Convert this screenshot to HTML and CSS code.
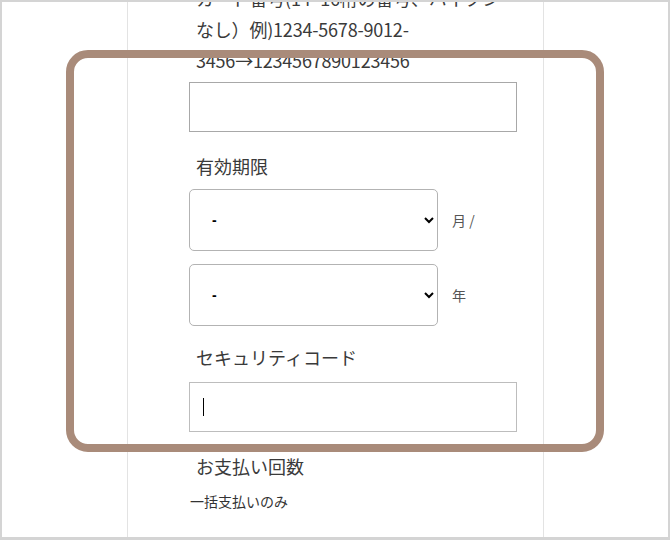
FILE: index.html
```html
<!DOCTYPE html>
<html lang="ja">
<head>
    <meta charset="UTF-8">
    <meta name="viewport" content="width=device-width, initial-scale=1.0">
    <title>お支払い情報</title>
    <link rel="stylesheet" href="styles.css">
</head>
<body>
    <div class="screen">
        <div class="page">
            <form class="card-form">
                <!-- Card number -->
                <p class="note">カード番号(14~16桁の番号、ハイフンなし）例)1234-5678-9012-3456→1234567890123456</p>
                <input type="text" class="field">

                <!-- Expiry -->
                <label class="label">有効期限</label>
                <div class="expiry-row">
                    <select class="pick"><option>-</option></select>
                    <span class="unit">月 /</span>
                </div>
                <div class="expiry-row">
                    <select class="pick"><option>-</option></select>
                    <span class="unit">年</span>
                </div>

                <!-- Security code -->
                <label class="label code-label">セキュリティコード</label>
                <div class="field-wrap">
                    <input type="text" class="field">
                    <span class="caret"></span>
                </div>

                <!-- Payments -->
                <label class="label">お支払い回数</label>
                <p class="plain">一括支払いのみ</p>
            </form>
        </div>

        <!-- highlight frame -->
        <div class="highlight"></div>
    </div>
</body>
</html>
```

FILE: styles.css
```css
body {
    margin: 0;
    font-family: "Noto Sans CJK JP", "Noto Sans", sans-serif;
    color: #3a3a3a;
    background: #fff;
}
.screen {
    position: relative;
    box-sizing: border-box;
    width: 670px;
    height: 540px;
    border: 2px solid #d4d4d4;
    border-bottom-width: 3px;
    overflow: hidden;
}
.page {
    display: flow-root;
    box-sizing: border-box;
    width: 417px;
    height: 100%;
    margin-left: 125px;
    border-left: 1px solid #e3e3e3;
    border-right: 1px solid #e3e3e3;
}
.card-form {
    display: flex;
    flex-direction: column;
    align-items: flex-start;
    padding-left: 61px;
    margin-top: -19px;
}
.note {
    margin: 0;
    width: 305px;
    padding-left: 7px;
    font-size: 18px;
    line-height: 31px;
    letter-spacing: -0.2px;
}
.field {
    box-sizing: border-box;
    width: 328px;
    height: 50px;
    margin: 6px 0 0;
    border: 1px solid #a8a8a8;
    border-radius: 0;
    background: #fff;
    outline: none;
}
.label {
    display: block;
    padding-left: 7px;
    margin-top: 19px;
    margin-bottom: 7px;
    font-size: 18px;
    line-height: 31px;
}
.expiry-row {
    display: flex;
    align-items: center;
    gap: 14px;
    margin-bottom: 13px;
}
.pick {
    box-sizing: border-box;
    width: 249px;
    height: 62px;
    padding-left: 18px;
    border: 1px solid #b3b3b3;
    border-radius: 5px;
    background: #fff;
    color: #000;
    font-size: 14px;
    font-weight: bold;
    font-family: "Liberation Sans", sans-serif;
}
.unit {
    font-size: 14px;
    color: #555;
}
.expiry-row + .label {
    margin-top: 3px;
}
.code-label {
    margin-bottom: 9px;
}
.field-wrap {
    position: relative;
}
.field-wrap .field {
    margin-top: 0;
    border-color: #bdbdbd;
}
.caret {
    position: absolute;
    left: 14px;
    top: 16px;
    width: 1px;
    height: 18px;
    background: #000;
}
.plain {
    margin: 0 0 0 1px;
    font-size: 14px;
    line-height: 24px;
    color: #333;
}
.highlight {
    position: absolute;
    left: 64px;
    top: 48px;
    width: 538px;
    height: 402px;
    box-sizing: border-box;
    border: 8px solid #a98b7a;
    border-radius: 22px;
}
```
